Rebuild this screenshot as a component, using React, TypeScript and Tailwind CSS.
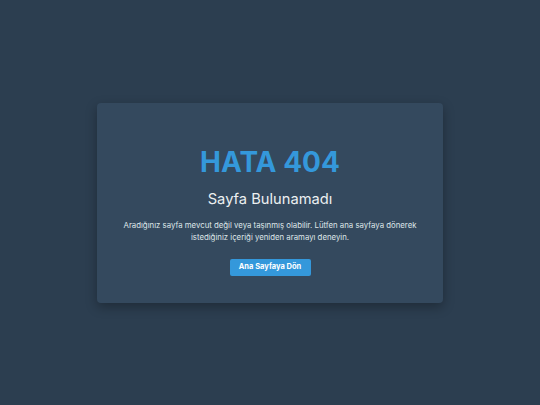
export default function App() {
  return (
    <div
      className="flex min-h-screen items-center justify-center bg-[#2c3e50] text-[#ecf0f1]"
      style={{ fontFamily: "Inter, 'Open Sans', sans-serif" }}
    >
      <div className="flex w-[346px] flex-col items-center rounded-[4px] bg-[#34495e] px-3 pt-[43px] pb-[25px] text-center shadow-[0_4px_12px_rgba(0,0,0,0.3)]">
        <h1 className="text-[28px] leading-[32px] font-bold text-[#3498db]">HATA 404</h1>
        <h2 className="mt-[11px] text-[14.7px] leading-[20px]">Sayfa Bulunamadı</h2>
        <p className="mt-[10px] text-[7.8px] leading-[12.5px] whitespace-nowrap text-[#dfe6e9]">
          Aradığınız sayfa mevcut değil veya taşınmış olabilir. Lütfen ana sayfaya dönerek
          <br />
          istediğiniz içeriği yeniden aramayı deneyin.
        </p>
        <button className="mt-[15px] mb-[2px] h-[17px] w-[81px] rounded-[2px] bg-[#3498db] text-[7.5px] font-bold text-white">
          Ana Sayfaya Dön
        </button>
      </div>
    </div>
  );
}
